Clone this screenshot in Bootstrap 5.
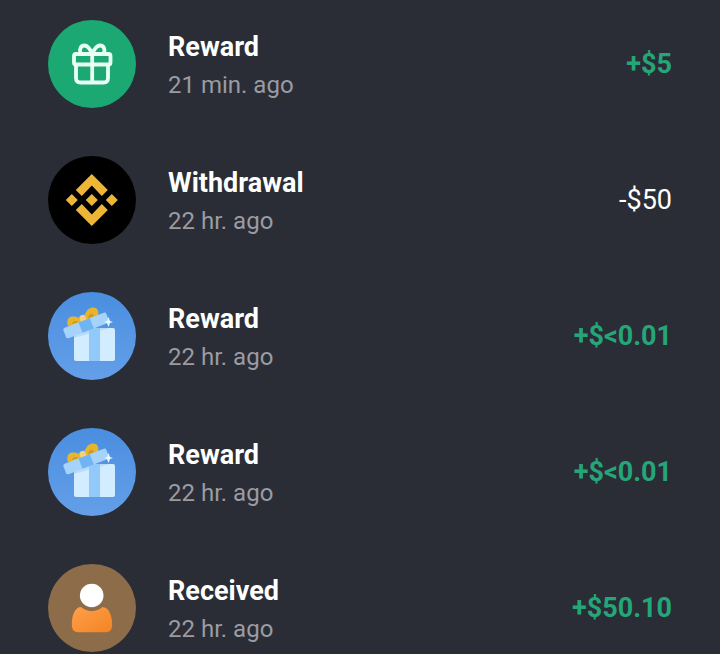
<!DOCTYPE html>
<html lang="en">
<head>
<meta charset="utf-8">
<meta name="viewport" content="width=device-width, initial-scale=1">
<title>Transactions</title>
<link href="https://cdn.jsdelivr.net/npm/bootstrap@5.3.0/dist/css/bootstrap.min.css" rel="stylesheet">
<style>
  body { background: #2a2d35; color: #fff; font-family: Roboto, "Liberation Sans", sans-serif; }
  .history { gap: 48px; padding: 20px 48px 2px; }
  .entry { gap: 32px; }
  .entry-icon { width: 88px; height: 88px; }
  .entry-text { padding-top: 6px; }
  .entry-title { font-size: 27px; line-height: 36px; font-weight: 700; }
  .entry-time { font-size: 24px; line-height: 40px; color: #9a9ba3; }
  .entry-amount { font-size: 27px; line-height: 36px; }
  .gain { color: #24a678; font-weight: 700; }
</style>
</head>
<body>
<svg width="0" height="0" class="position-absolute" aria-hidden="true">
  <defs>
    <linearGradient id="sky" x1="0" y1="0" x2="0" y2="1"><stop offset="0" stop-color="#4a8ee0"/><stop offset="1" stop-color="#649fe8"/></linearGradient>
    <linearGradient id="torso" x1="0" y1="0" x2="1" y2="1"><stop offset="0" stop-color="#ff9f4c"/><stop offset="1" stop-color="#f38422"/></linearGradient>
    <symbol id="open-gift" viewBox="0 0 88 88">
      <circle cx="44" cy="44" r="44" fill="url(#sky)"/>
      <rect x="26" y="36" width="41" height="33" rx="2" fill="#d2edff"/>
      <path d="M26 38l10-2h26l-22 6-14 4z" fill="#b9dcfb"/>
      <path d="M41 36h11v33H41z" fill="#91c9fb"/>
      <path d="M20 34c-2-5 0-9 4-9.500 4-.5 8 1 11 5l-2 3z" fill="#e6b52c"/>
      <path d="M36 28c0-7 4-12.500 9-12.500 5 0 7 5 4 10l-12 6z" fill="#e6b52c"/>
      <path d="M24 32c0-3 4-4 7-2zM40 27c0-5 5-7 6-3z" fill="#cf9a20"/>
      <rect x="32" y="23" width="6" height="9" rx="2" fill="#f2d183" transform="rotate(-21 35 27)"/>
      <g transform="rotate(-21 38 33)">
        <rect x="15" y="28" width="46" height="11" rx="2" fill="#a5d3fb"/>
        <path d="M32 28h12v11H32z" fill="#71b4f4"/>
      </g>
      <path d="M60.500 25l1.500 4 3 1-3 1-1.500 4-1.500-4-3-1 3-1z" fill="#e6f6ff"/>
    </symbol>
  </defs>
</svg>

<main>
  <ul class="history list-unstyled d-flex flex-column mb-0">
    <li class="entry d-flex align-items-center">
      <svg class="entry-icon flex-shrink-0" viewBox="0 0 88 88" aria-hidden="true">
        <circle cx="44" cy="44" r="44" fill="#1ba873"/>
        <g fill="none" stroke="#e9fff5" stroke-width="3.8" stroke-linecap="round" stroke-linejoin="round">
          <rect x="26" y="34" width="36.500" height="10.500" rx="2"/>
          <path d="M28 45v13q0 4.500 4.500 4.500h23q4.500 0 4.500-4.500V45M44.200 34v28"/>
          <path d="M32.500 33c-1.500-4 .5-7.500 4-7.500 4 0 6 4.500 7.700 8.500 1.700-4 3.800-8.500 7.800-8.500 3.500 0 5.500 3.500 4 7.500"/>
        </g>
      </svg>
      <div class="entry-text flex-grow-1">
        <div class="entry-title">Reward</div>
        <div class="entry-time">21 min. ago</div>
      </div>
      <div class="entry-amount gain">+$5</div>
    </li>
    <li class="entry d-flex align-items-center">
      <svg class="entry-icon flex-shrink-0" viewBox="0 0 88 88" aria-hidden="true">
        <circle cx="44" cy="44" r="44" fill="#000"/>
        <path fill="#edb637" d="M43.800 18l16 16-6 6-10-10.500-10 10.500-6-6zM43.800 70l16-16-6-6-10 10.500-10-10.500-6 6zM23.800 38l6 6-6 6-6-6zM43.800 38l6 6-6 6-6-6zM63.800 38l6 6-6 6-6-6z"/>
      </svg>
      <div class="entry-text flex-grow-1">
        <div class="entry-title">Withdrawal</div>
        <div class="entry-time">22 hr. ago</div>
      </div>
      <div class="entry-amount">-$50</div>
    </li>
    <li class="entry d-flex align-items-center">
      <svg class="entry-icon flex-shrink-0" aria-hidden="true"><use href="#open-gift"/></svg>
      <div class="entry-text flex-grow-1">
        <div class="entry-title">Reward</div>
        <div class="entry-time">22 hr. ago</div>
      </div>
      <div class="entry-amount gain">+$&lt;0.01</div>
    </li>
    <li class="entry d-flex align-items-center">
      <svg class="entry-icon flex-shrink-0" aria-hidden="true"><use href="#open-gift"/></svg>
      <div class="entry-text flex-grow-1">
        <div class="entry-title">Reward</div>
        <div class="entry-time">22 hr. ago</div>
      </div>
      <div class="entry-amount gain">+$&lt;0.01</div>
    </li>
    <li class="entry d-flex align-items-center">
      <svg class="entry-icon flex-shrink-0" viewBox="0 0 88 88" aria-hidden="true">
        <circle cx="44" cy="44" r="44" fill="#8d6c49"/>
        <circle cx="43.700" cy="31.500" r="11.800" fill="#fff"/>
        <path fill="url(#torso)" d="M33 43c6 5.500 15.500 5.500 21.500 0C61 43 64 52 64.200 60c0 6-2 8.300-7.500 8.300H31.300C26 68.300 23.800 66 23.800 60 24 51 27 43 33 43z"/>
      </svg>
      <div class="entry-text flex-grow-1">
        <div class="entry-title">Received</div>
        <div class="entry-time">22 hr. ago</div>
      </div>
      <div class="entry-amount gain">+$50.10</div>
    </li>
  </ul>
</main>
<script src="https://cdn.jsdelivr.net/npm/bootstrap@5.3.0/dist/js/bootstrap.bundle.min.js"></script>
</body>
</html>
